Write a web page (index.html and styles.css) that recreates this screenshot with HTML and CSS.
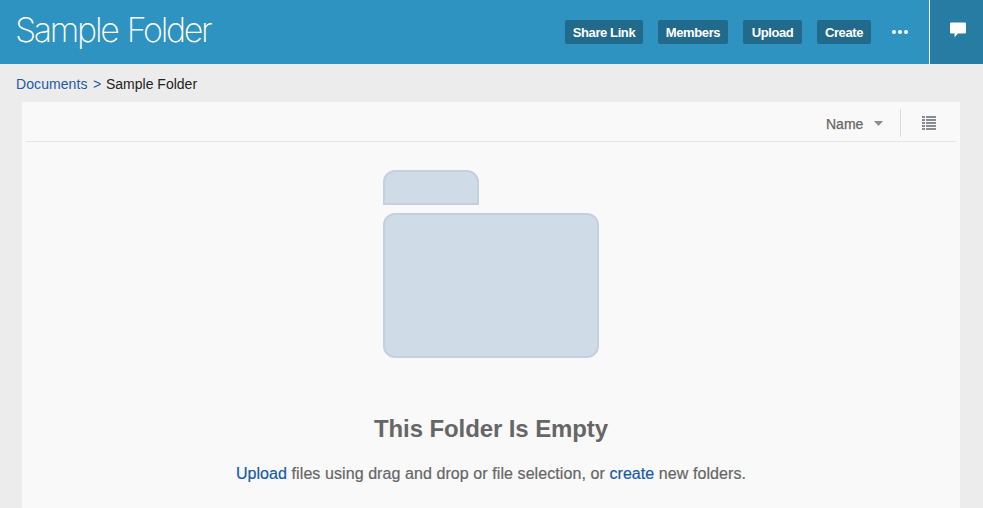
FILE: index.html
```html
<!DOCTYPE html>
<html lang="en">
<head>
<meta charset="utf-8">
<title>Sample Folder</title>
<link rel="stylesheet" href="styles.css">
</head>
<body>
<header class="topbar">
  <h1 class="title">Sample Folder</h1>
  <div class="actions">
    <button class="btn share"><span>Share Link</span></button>
    <button class="btn members"><span>Members</span></button>
    <button class="btn upload"><span>Upload</span></button>
    <button class="btn create"><span>Create</span></button>
    <button class="more" aria-label="More"><svg width="18" height="6" viewBox="0 0 18 6"><circle cx="3" cy="3" r="2.1"/><circle cx="9" cy="3" r="2.1"/><circle cx="15" cy="3" r="2.1"/></svg></button>
  </div>
  <button class="comments" aria-label="Comments"><svg width="16" height="16" viewBox="0 0 16 16"><path d="M1 .5h14q1 0 1 1v9q0 1-1 1H8L4.6 15.2V11.5H1q-1 0-1-1v-9q0-1 1-1z"/></svg></button>
</header>
<nav class="crumbs"><a class="crumb-docs">Documents</a><span class="crumb-sep">&gt;</span><span class="crumb-here">Sample Folder</span></nav>
<main class="panel">
  <div class="toolbar">
    <span class="sort">Name</span>
    <svg class="caret" width="9" height="5" viewBox="0 0 9 5"><path d="M0 0h9L4.5 5z"/></svg>
    <span class="divider"></span>
    <svg class="list" width="14" height="14" viewBox="0 0 14 14" shape-rendering="crispEdges"><path d="M0 0h3v2H0zM4 0h10v2H4zM0 3h3v2H0zM4 3h10v2H4zM0 6h3v2H0zM4 6h10v2H4zM0 9h3v2H0zM4 9h10v2H4zM0 12h3v2H0zM4 12h10v2H4z"/></svg>
  </div>
  <div class="folder"><div class="tab"></div><div class="body"></div></div>
  <h2 class="empty">This Folder Is Empty</h2>
  <p class="hint"><a>Upload</a> files using drag and drop or file selection, or <a>create</a> new folders.</p>
</main>
</body>
</html>
```
FILE: styles.css
```css
* { box-sizing: border-box; }
body { margin: 0; height: 508px; overflow: hidden; display: flex; flex-direction: column; background: #ececec; font-family: "Liberation Sans", Arial, sans-serif; }
button { border: 0; padding: 0; font-family: inherit; }
svg { display: block; flex: none; }
.topbar { flex: none; height: 64px; display: flex; background: #2e93c0; color: #fff; }
.title { margin: 0 auto 0 15px; font: 200 34px/60px Inter, sans-serif; letter-spacing: -2.3px; word-spacing: 2px; white-space: nowrap; }
.actions { display: flex; align-items: center; }
.btn { height: 24px; padding-top: 1px; border-radius: 2px; background: #226a8b; color: #fff; font-size: 13px; line-height: 23px; font-weight: bold; white-space: nowrap; letter-spacing: -.4px; }
.share { width: 78px; margin-right: 15px; }
.members { width: 70px; margin-right: 15px; }
.upload { width: 59px; margin-right: 15px; }
.create { width: 54px; margin-right: 20px; }
.more { width: 38px; background: none; }
.more svg, .comments svg { fill: #fff; }
.comments { width: 54px; padding: 22px 0 0 20px; display: flex; align-items: flex-start; background: #267ca2; border-left: 1px solid #fff; }
.crumbs { flex: none; height: 38px; padding-left: 16px; display: flex; font-size: 14px; line-height: 40px; color: #222; white-space: nowrap; }
.crumbs a, .crumb-sep { color: #1f5aa6; }
.crumb-docs { width: 77px; letter-spacing: .08px; }
.crumb-sep { width: 13px; }
.panel { flex: 1; margin: 0 23px 0 22px; padding: 0 4px; background: #f9f9f9; color: #666; }
.toolbar { height: 40px; display: flex; align-items: center; justify-content: flex-end; padding: 3px 20px 0 0; border-bottom: 1px solid #e3e5e6; fill: #888c90; }
.sort { font-size: 14px; line-height: 20px; width: 38px; margin-right: 10px; padding-top: 2px; -webkit-text-stroke: .25px #666; }
.divider { width: 1px; height: 28px; margin: 0 21px 0 17px; background: #d5dce5; }
.folder { width: 216px; margin: 28px 0 0 357px; }
.tab, .body { background: #cfdbe6; border: 2px solid #c3d0dd; }
.tab { width: 96px; height: 35px; border-radius: 12px 12px 0 0; margin-bottom: 8px; }
.body { height: 145px; border-radius: 12px; }
.empty { margin: 55px 0 0; font-size: 24px; line-height: 32px; text-align: center; letter-spacing: -.1px; }
.hint { margin: 19px 0 0; font-size: 16px; line-height: 20px; text-align: center; white-space: nowrap; letter-spacing: .08px; -webkit-text-stroke: .2px currentColor; }
.hint a { color: #1659a7; }
```
